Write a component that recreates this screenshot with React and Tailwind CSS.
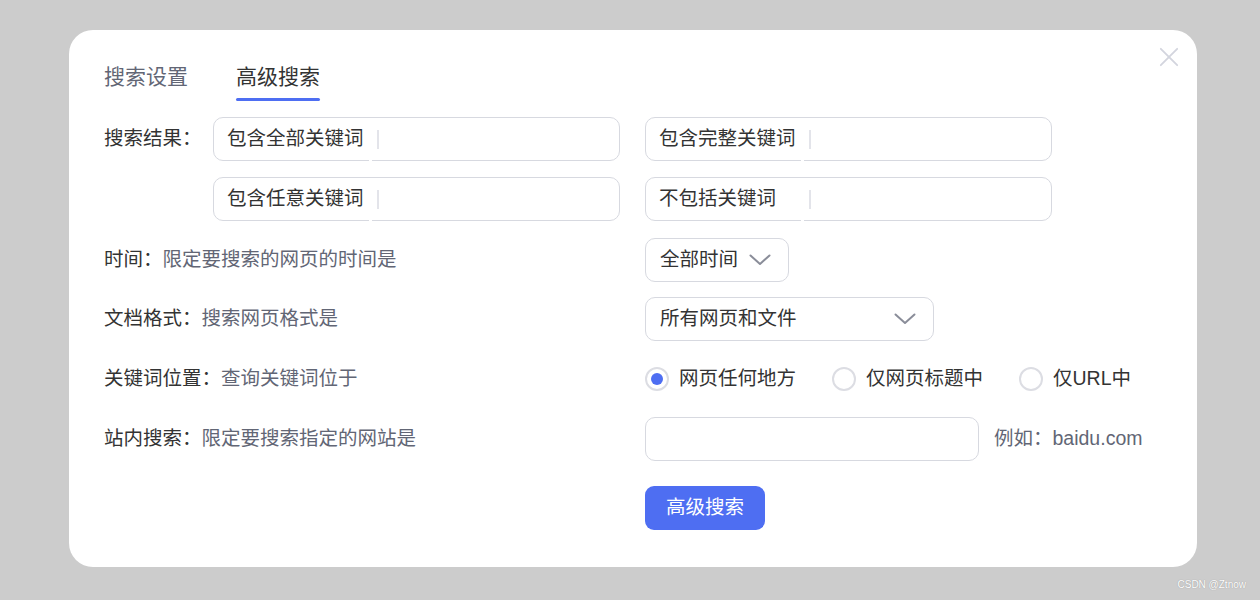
const font = { fontFamily: '"Liberation Sans", "Noto Sans CJK SC", sans-serif' };

function Chevron() {
  return (
    <svg width="22" height="12" viewBox="0 0 22 12" fill="none">
      <path d="M1.5 1.5 L11 10 L20.5 1.5" stroke="#8a8d99" strokeWidth="2" strokeLinecap="round" strokeLinejoin="round" />
    </svg>
  );
}

function PrefixInput({ label }) {
  return (
    <div className="relative flex h-[44px] w-[407px] items-center rounded-[10px] border border-[#d7d9e0] bg-white pl-[13px]">
      <span className="w-[150px] shrink-0 text-[#333]">{label}</span>
      <span className="h-[19px] w-[2px] bg-[#e3e4ea]" />
      <span className="absolute bottom-[-1px] left-[155px] h-[2px] w-[3px] bg-white" />
    </div>
  );
}

function Radio({ checked, label }) {
  return (
    <label className="flex items-center">
      <span className="flex h-[24px] w-[24px] items-center justify-center rounded-full border-2 border-[#dcdde3]">
        {checked && <span className="h-[12px] w-[12px] rounded-full bg-[#4e6ef2]" />}
      </span>
      <span className="ml-[10px] text-[#333]">{label}</span>
    </label>
  );
}

export default function App() {
  return (
    <div className="relative h-[600px] w-full bg-[#cccccc] pl-[69px] pt-[30px] text-[19.5px]" style={font}>
      <div className="relative h-[537px] w-[1128px] rounded-[24px] bg-white px-[35px] pt-[32px]">
        <button className="absolute right-[18px] top-[17px] flex h-[20px] w-[20px] items-center justify-center">
          <svg width="22" height="22" viewBox="0 0 22 22" fill="none">
            <path d="M2 2 L20 20 M20 2 L2 20" stroke="#d3d5de" strokeWidth="2" strokeLinecap="round" />
          </svg>
        </button>

        {/* tabs */}
        <div className="flex gap-[48px] text-[21px] leading-[30px]">
          <div className="flex flex-col">
            <span className="text-[#626675]">搜索设置</span>
          </div>
          <div className="flex flex-col">
            <span className="text-[#333]">高级搜索</span>
            <span className="mt-[6px] h-[3px] rounded-full bg-[#4e6ef2]" />
          </div>
        </div>

        {/* rows */}
        <div className="mt-[16px] flex flex-col">
          <div className="flex h-[44px] items-center">
            <div className="w-[109px] shrink-0 text-[#333]">搜索结果：</div>
            <PrefixInput label="包含全部关键词" />
            <div className="ml-[25px]">
              <PrefixInput label="包含完整关键词" />
            </div>
          </div>
          <div className="mt-[16px] flex h-[44px] items-center">
            <div className="w-[109px] shrink-0" />
            <PrefixInput label="包含任意关键词" />
            <div className="ml-[25px]">
              <PrefixInput label="不包括关键词" />
            </div>
          </div>

          <div className="mt-[17px] flex h-[44px] items-center">
            <div className="w-[541px] shrink-0 text-[#333]">
              时间：<span className="text-[#626675]">限定要搜索的网页的时间是</span>
            </div>
            <div className="flex h-[44px] w-[144px] items-center justify-between rounded-[10px] border border-[#d7d9e0] pl-[14px] pr-[17px] text-[#333]">
              <span>全部时间</span>
              <Chevron />
            </div>
          </div>

          <div className="mt-[15px] flex h-[44px] items-center">
            <div className="w-[541px] shrink-0 text-[#333]">
              文档格式：<span className="text-[#626675]">搜索网页格式是</span>
            </div>
            <div className="flex h-[44px] w-[289px] items-center justify-between rounded-[10px] border border-[#d7d9e0] pl-[14px] pr-[17px] text-[#333]">
              <span>所有网页和文件</span>
              <Chevron />
            </div>
          </div>

          <div className="mt-[16px] flex h-[44px] items-center">
            <div className="w-[541px] shrink-0 text-[#333]">
              关键词位置：<span className="text-[#626675]">查询关键词位于</span>
            </div>
            <div className="flex items-center gap-[36px]">
              <Radio checked label="网页任何地方" />
              <Radio label="仅网页标题中" />
              <Radio label="仅URL中" />
            </div>
          </div>

          <div className="mt-[16px] flex h-[44px] items-center">
            <div className="w-[541px] shrink-0 text-[#333]">
              站内搜索：<span className="text-[#626675]">限定要搜索指定的网站是</span>
            </div>
            <div className="h-[44px] w-[334px] rounded-[10px] border border-[#d7d9e0]" />
            <span className="ml-[15px] text-[#626675]">例如：baidu.com</span>
          </div>

          <div className="mt-[25px] flex">
            <div className="w-[541px] shrink-0" />
            <button className="h-[44px] w-[120px] rounded-[9px] bg-[#4e6ef2] text-white">高级搜索</button>
          </div>
        </div>
      </div>
      <span
        className="absolute bottom-[8px] right-[14px] text-[10px] text-white"
        style={{ textShadow: "0 0 1px rgba(0,0,0,.35)" }}
      >
        CSDN @Ztnow
      </span>
    </div>
  );
}
